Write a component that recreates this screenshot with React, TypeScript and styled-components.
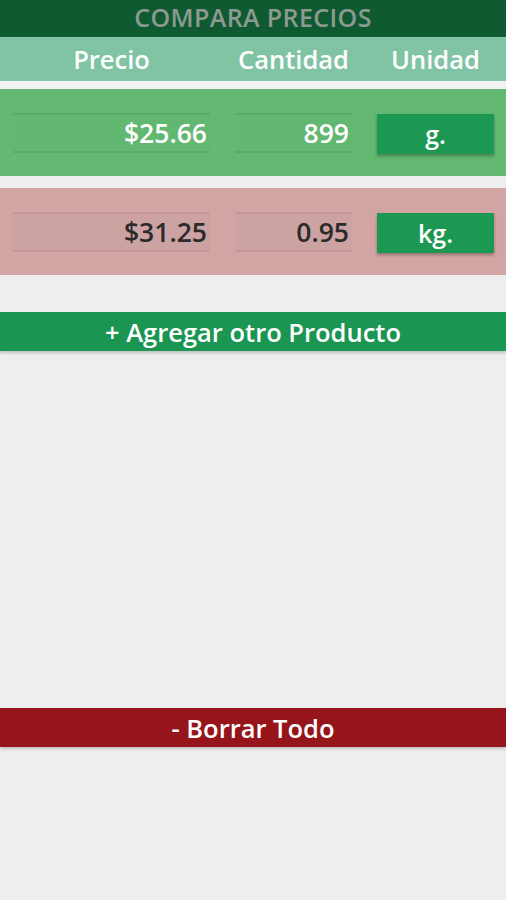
import React from 'react';
import styled, { createGlobalStyle } from 'styled-components';

const GlobalStyle = createGlobalStyle`
  html, body {
    margin: 0;
    padding: 0;
    background: #eeeeee;
  }
  body {
    font-family: "Open Sans", Lato, "Liberation Sans", sans-serif;
  }
`;

type Product = {
  id: number;
  price: string;
  qty: string;
  unit: string;
  tone: 'best' | 'worse';
};

const PRODUCTS: Product[] = [
  { id: 1, price: '$25.66', qty: '899', unit: 'g.', tone: 'best' },
  { id: 2, price: '$31.25', qty: '0.95', unit: 'kg.', tone: 'worse' },
];

const App = () => {
  return (
    <Page>
      <GlobalStyle />
      <TitleBar>COMPARA PRECIOS</TitleBar>
      <HeaderRow>
        <HeaderCell>Precio</HeaderCell>
        <HeaderCell>Cantidad</HeaderCell>
        <HeaderCell>Unidad</HeaderCell>
      </HeaderRow>
      <ProductList>
        {PRODUCTS.map((p) => (
          <ProductRow key={p.id} $tone={p.tone}>
            <Field $tone={p.tone}>{p.price}</Field>
            <Field $tone={p.tone}>{p.qty}</Field>
            <UnitButton>{p.unit}</UnitButton>
          </ProductRow>
        ))}
      </ProductList>
      <AddButton>+ Agregar otro Producto</AddButton>
      <ClearButton>- Borrar Todo</ClearButton>
    </Page>
  );
};

export default App;

const Page = styled.div`
  width: 506px;
  min-height: 900px;
  background: #eeeeee;
  display: flex;
  flex-direction: column;
`;

const TitleBar = styled.div`
  height: 37px;
  background: #0f5a31;
  color: #8c9a91;
  font-size: 25px;
  line-height: 1.2;
  letter-spacing: 0.4px;
  font-weight: 600;
  display: flex;
  align-items: center;
  justify-content: center;
  padding-bottom: 3px;
  box-sizing: border-box;
`;

const HeaderRow = styled.div`
  height: 52px;
  background: #80c4a4;
  display: grid;
  grid-template-columns: 197px 117px 117px;
  column-gap: 25px;
  align-items: center;
  padding: 0 12px 0 13px;
  box-sizing: border-box;
  border-bottom: 8px solid #f2f2f2;
`;

const HeaderCell = styled.div`
  color: #ffffff;
  font-size: 25.5px;
  font-weight: 600;
  text-align: center;
  white-space: nowrap;
`;

const ProductList = styled.div`
  display: flex;
  flex-direction: column;
  gap: 12px;
`;

const ProductRow = styled.div<{ $tone: 'best' | 'worse' }>`
  height: 87px;
  background: ${(p) => (p.$tone === 'best' ? '#63b872' : '#d2a4a4')};
  display: grid;
  grid-template-columns: 197px 117px 117px;
  column-gap: 25px;
  align-items: center;
  padding: 0 12px 0 13px;
  box-sizing: border-box;
`;

const Field = styled.div<{ $tone: 'best' | 'worse' }>`
  height: 40px;
  box-sizing: border-box;
  border-top: 2px solid ${(p) => (p.$tone === 'best' ? '#58ab66' : '#c29a9a')};
  border-bottom: 2px solid ${(p) => (p.$tone === 'best' ? '#58ab66' : '#c29a9a')};
  background: ${(p) => (p.$tone === 'best' ? '#62b771' : '#cda2a2')};
  color: ${(p) => (p.$tone === 'best' ? '#ffffff' : '#2b2b2b')};
  font-size: 26.5px;
  font-weight: 600;
  display: flex;
  align-items: center;
  justify-content: flex-end;
  padding-right: 3px;
`;

const UnitButton = styled.div`
  height: 40px;
  margin-top: 2px;
  background: #1d9853;
  box-shadow: 0 2px 3px rgba(0, 0, 0, 0.3);
  color: #ffffff;
  font-size: 25px;
  font-weight: 600;
  display: flex;
  align-items: center;
  justify-content: center;
`;

const BarButton = styled.div`
  height: 39px;
  color: #ffffff;
  font-size: 25.5px;
  font-weight: 600;
  display: flex;
  align-items: center;
  justify-content: center;
  box-shadow: 0 2px 3px rgba(0, 0, 0, 0.2);
`;

const AddButton = styled(BarButton)`
  margin-top: 37px;
  background: #1a9552;
`;

const ClearButton = styled(BarButton)`
  margin-top: 357px;
  background: #96151b;
`;
